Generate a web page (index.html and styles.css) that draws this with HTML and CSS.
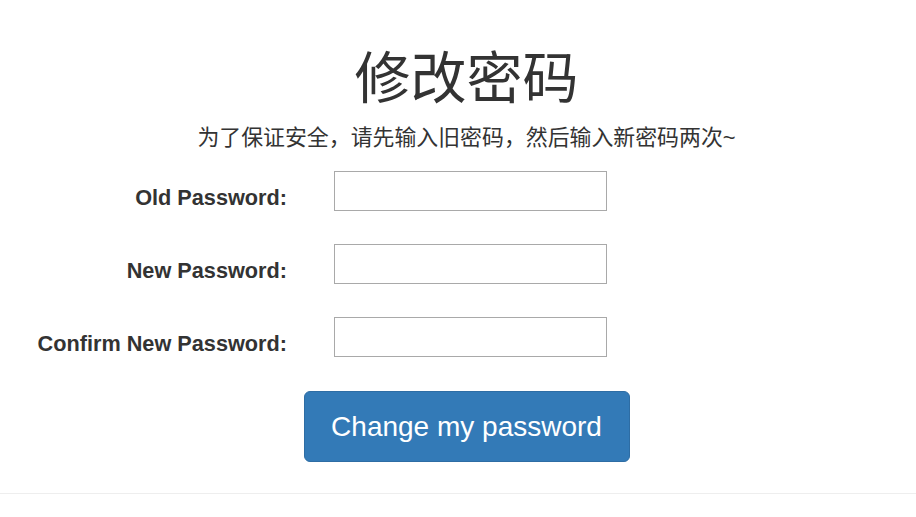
FILE: index.html
```html
<!DOCTYPE html>
<html lang="zh-CN">
<head>
<meta charset="utf-8">
<title>修改密码</title>
<link rel="stylesheet" href="styles.css">
</head>
<body>
<main class="page">
  <h1 class="title">修改密码</h1>
  <p class="lead">为了保证安全，请先输入旧密码，然后输入新密码两次~</p>
  <form class="pw-form">
    <div class="row">
      <label class="label" for="old">Old Password:</label>
      <input class="field" id="old" type="password">
    </div>
    <div class="row">
      <label class="label" for="new1">New Password:</label>
      <input class="field" id="new1" type="password">
    </div>
    <div class="row">
      <label class="label" for="new2">Confirm New Password:</label>
      <input class="field" id="new2" type="password">
    </div>
    <div class="actions">
      <button class="btn" type="submit">Change my password</button>
    </div>
  </form>
</main>
<hr class="rule">
</body>
</html>
```
FILE: styles.css
```css
html, body {
  margin: 0;
  padding: 0;
  background: #fff;
}
body {
  font-family: "Liberation Sans", Arial, "Noto Sans CJK SC", sans-serif;
  color: #333;
}
.page {
  padding: 36px 0 0 17px;
  text-align: center;
}
.title {
  margin: 0;
  font-family: "Noto Sans CJK SC", sans-serif;
  font-weight: 400;
  font-size: 56px;
  line-height: 76px;
}
.lead {
  margin: 11px 0 0;
  font-family: "Liberation Sans", "Noto Sans CJK SC", sans-serif;
  font-size: 21.9px;
  line-height: 30px;
}
.pw-form {
  margin: 18px 0 0 -17px;
  display: flex;
  flex-direction: column;
  gap: 33px;
  align-items: flex-start;
}
.row {
  display: grid;
  grid-template-columns: 287px 273px;
  column-gap: 47px;
  align-items: start;
}
.label {
  text-align: right;
  font-weight: 700;
  font-size: 21.7px;
  line-height: 27px;
  padding-top: 13px;
}
.field {
  box-sizing: border-box;
  width: 273px;
  height: 40px;
  margin: 0;
  border: 1px solid #a9a9a9;
  border-radius: 0;
  padding: 2px 4px;
  font-size: 16px;
}
.actions {
  align-self: stretch;
  display: flex;
  justify-content: center;
  padding-left: 17px;
  margin-top: 1px;
}
.btn {
  box-sizing: border-box;
  width: 326px;
  height: 71px;
  background: #337ab7;
  border: 1px solid #2e6da4;
  border-radius: 6px;
  color: #fff;
  font-family: "Liberation Sans", Arial, sans-serif;
  font-size: 28px;
  padding: 0;
}
.rule {
  margin: 31px 0 0;
  border: 0;
  border-top: 1px solid #eee;
}
```
